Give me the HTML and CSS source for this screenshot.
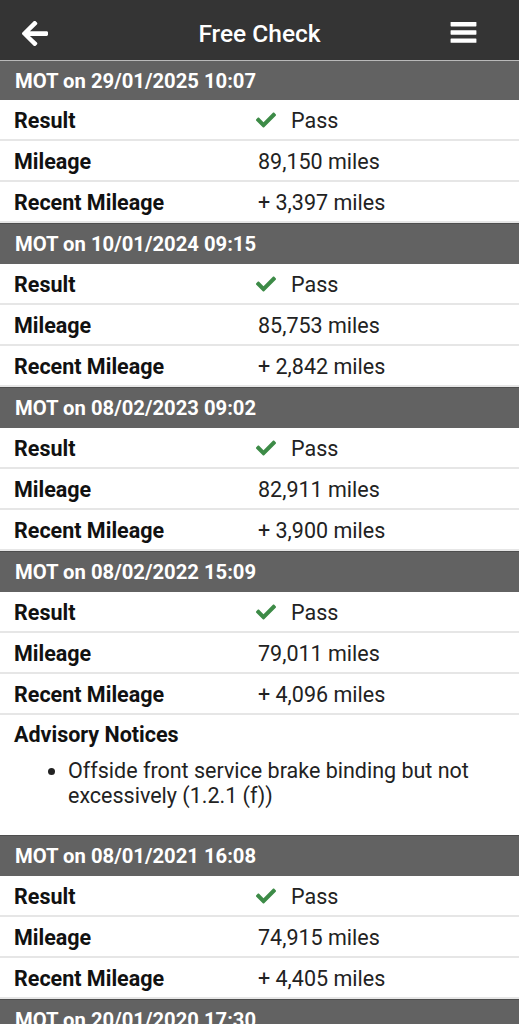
FILE: index.html
```html
<!DOCTYPE html>
<html lang="en">
<head>
<meta charset="utf-8">
<title>Free Check</title>
<link rel="stylesheet" href="styles.css">
</head>
<body>
<header class="topbar">
  <div class="tb-left">
    <svg class="icon-back" viewBox="0 0 448 430" aria-hidden="true"><path transform="translate(0,-40)" d="M257.5 445.1l-22.2 22.2c-9.4 9.4-24.6 9.4-33.9 0L7 273c-9.4-9.4-9.4-24.6 0-33.9L201.4 44.7c9.4-9.4 24.6-9.4 33.9 0l22.2 22.2c9.5 9.5 9.3 25-.4 34.3L136.6 216H424c13.3 0 24 10.7 24 24v32c0 13.3-10.7 24-24 24H136.6l120.5 114.8c9.8 9.3 10 24.8.4 34.3z" fill="#fff"/></svg>
  </div>
  <h1 class="title">Free Check</h1>
  <div class="tb-right">
    <svg class="icon-menu" viewBox="0 0 27 23" aria-hidden="true"><rect x="0" y="0" width="27" height="4.6" rx="0.6" fill="#fff"/><rect x="0" y="8.6" width="27" height="4.6" rx="0.6" fill="#fff"/><rect x="0" y="17.2" width="27" height="4.6" rx="0.6" fill="#fff"/></svg>
  </div>
</header>

<main class="list">
  <section class="mot">
    <h2 class="mot-head">MOT on 29/01/2025 10:07</h2>
    <div class="row"><span class="label">Result</span><span class="value"><svg class="check" viewBox="0 0 512 400"><path transform="translate(0,-56)" d="M173.898 439.404l-166.4-166.4c-9.997-9.997-9.997-26.206 0-36.204l36.203-36.204c9.997-9.998 26.207-9.998 36.204 0L192 312.69 432.095 72.596c9.997-9.997 26.207-9.997 36.204 0l36.203 36.204c9.997 9.997 9.997 26.206 0 36.204l-294.4 294.401c-9.998 9.997-26.207 9.997-36.204-.001z"/></svg>Pass</span></div>
    <div class="row"><span class="label">Mileage</span><span class="value">89,150 miles</span></div>
    <div class="row"><span class="label">Recent Mileage</span><span class="value">+ 3,397 miles</span></div>
  </section>

  <section class="mot">
    <h2 class="mot-head">MOT on 10/01/2024 09:15</h2>
    <div class="row"><span class="label">Result</span><span class="value"><svg class="check" viewBox="0 0 512 400"><path transform="translate(0,-56)" d="M173.898 439.404l-166.4-166.4c-9.997-9.997-9.997-26.206 0-36.204l36.203-36.204c9.997-9.998 26.207-9.998 36.204 0L192 312.69 432.095 72.596c9.997-9.997 26.207-9.997 36.204 0l36.203 36.204c9.997 9.997 9.997 26.206 0 36.204l-294.4 294.401c-9.998 9.997-26.207 9.997-36.204-.001z"/></svg>Pass</span></div>
    <div class="row"><span class="label">Mileage</span><span class="value">85,753 miles</span></div>
    <div class="row"><span class="label">Recent Mileage</span><span class="value">+ 2,842 miles</span></div>
  </section>

  <section class="mot">
    <h2 class="mot-head">MOT on 08/02/2023 09:02</h2>
    <div class="row"><span class="label">Result</span><span class="value"><svg class="check" viewBox="0 0 512 400"><path transform="translate(0,-56)" d="M173.898 439.404l-166.4-166.4c-9.997-9.997-9.997-26.206 0-36.204l36.203-36.204c9.997-9.998 26.207-9.998 36.204 0L192 312.69 432.095 72.596c9.997-9.997 26.207-9.997 36.204 0l36.203 36.204c9.997 9.997 9.997 26.206 0 36.204l-294.4 294.401c-9.998 9.997-26.207 9.997-36.204-.001z"/></svg>Pass</span></div>
    <div class="row"><span class="label">Mileage</span><span class="value">82,911 miles</span></div>
    <div class="row"><span class="label">Recent Mileage</span><span class="value">+ 3,900 miles</span></div>
  </section>

  <section class="mot">
    <h2 class="mot-head">MOT on 08/02/2022 15:09</h2>
    <div class="row"><span class="label">Result</span><span class="value"><svg class="check" viewBox="0 0 512 400"><path transform="translate(0,-56)" d="M173.898 439.404l-166.4-166.4c-9.997-9.997-9.997-26.206 0-36.204l36.203-36.204c9.997-9.998 26.207-9.998 36.204 0L192 312.69 432.095 72.596c9.997-9.997 26.207-9.997 36.204 0l36.203 36.204c9.997 9.997 9.997 26.206 0 36.204l-294.4 294.401c-9.998 9.997-26.207 9.997-36.204-.001z"/></svg>Pass</span></div>
    <div class="row"><span class="label">Mileage</span><span class="value">79,011 miles</span></div>
    <div class="row"><span class="label">Recent Mileage</span><span class="value">+ 4,096 miles</span></div>
    <div class="advisory">
      <h3 class="adv-title">Advisory Notices</h3>
      <ul class="adv-list">
        <li>Offside front service brake binding but not excessively (1.2.1 (f))</li>
      </ul>
    </div>
  </section>

  <section class="mot">
    <h2 class="mot-head">MOT on 08/01/2021 16:08</h2>
    <div class="row"><span class="label">Result</span><span class="value"><svg class="check" viewBox="0 0 512 400"><path transform="translate(0,-56)" d="M173.898 439.404l-166.4-166.4c-9.997-9.997-9.997-26.206 0-36.204l36.203-36.204c9.997-9.998 26.207-9.998 36.204 0L192 312.69 432.095 72.596c9.997-9.997 26.207-9.997 36.204 0l36.203 36.204c9.997 9.997 9.997 26.206 0 36.204l-294.4 294.401c-9.998 9.997-26.207 9.997-36.204-.001z"/></svg>Pass</span></div>
    <div class="row"><span class="label">Mileage</span><span class="value">74,915 miles</span></div>
    <div class="row"><span class="label">Recent Mileage</span><span class="value">+ 4,405 miles</span></div>
  </section>

  <section class="mot">
    <h2 class="mot-head">MOT on 20/01/2020 17:30</h2>
  </section>
</main>
</body>
</html>
```

FILE: styles.css
```css
* { box-sizing: border-box; }

html, body {
  margin: 0;
  padding: 0;
  background: #ffffff;
  font-family: Roboto, "Noto Sans", "Liberation Sans", sans-serif;
  color: #111;
  overflow: hidden;
  height: 1024px;
}

.topbar {
  height: 61px;
  background: #343434;
  border-bottom: 1px solid #b9b9b9;
  display: grid;
  grid-template-columns: 1fr auto 1fr;
  align-items: center;
  padding: 6px 22px 0 22px;
}

.tb-left { display: flex; align-items: center; }
.tb-right { display: flex; justify-content: flex-end; align-items: center; padding-right: 20px; }

.icon-back { width: 26px; height: 25px; display: block; }
.icon-menu { width: 27px; height: 22px; display: block; margin-top: -1px; }

.title {
  margin: 0;
  color: #fff;
  font-size: 24.5px;
  font-weight: 500;
  letter-spacing: 0;
}

.list { display: block; }

.mot { display: block; }

.mot-head {
  margin: 0;
  height: 41px;
  background: #626262;
  border-top: 1px solid #4e4e4e;
  color: #fff;
  font-size: 20.25px;
  font-weight: 700;
  display: flex;
  align-items: center;
  padding-left: 15px;
}

.mot:first-child .mot-head { height: 39px; border-top: none; }

.row {
  height: 41px;
  border-bottom: 2px solid #e6e6e6;
  display: grid;
  grid-template-columns: 242px 1fr;
  align-items: center;
  padding-left: 14px;
  padding-top: 1px;
  font-size: 21.5px;
}

.label { font-weight: 700; color: #111; }

.value {
  display: flex;
  align-items: center;
  color: #222;
  font-weight: 400;
  padding-left: 2px;
}

.check {
  width: 20px;
  height: 16px;
  fill: #3d8b47;
  margin: 0 15px 0 -2px;
  display: block;
}

.advisory {
  height: 120px;
  padding: 7px 14px 0 14px;
}

.adv-title {
  margin: 0;
  font-size: 21.5px;
  font-weight: 700;
  line-height: 26px;
}

.adv-list {
  margin: 10px 0 0 0;
  padding-left: 54px;
  font-size: 21.5px;
  line-height: 25px;
  color: #222;
}

.adv-list li { padding-left: 0; }
```
